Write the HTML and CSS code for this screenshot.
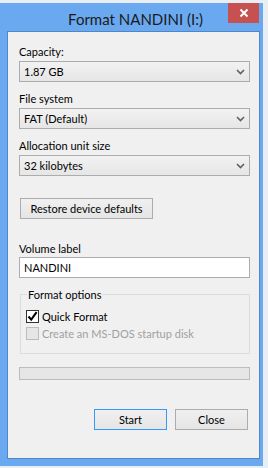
FILE: index.html
```html
<!DOCTYPE html>
<html lang="en">
<head>
    <meta charset="UTF-8">
    <title>Format NANDINI (I:)</title>
    <link rel="stylesheet" href="styles.css">
</head>
<body>
    <div class="window">
        <div class="titlebar">
            <span class="title">Format NANDINI (I:)</span>
            <button class="close-btn" title="Close">
                <svg width="10" height="10" viewBox="0 0 10 10">
                    <path d="M1.5 1.5 L8.5 8.5 M8.5 1.5 L1.5 8.5" stroke="#fff" stroke-width="2"/>
                </svg>
            </button>
        </div>

        <div class="client">
            <div class="field">
                <div class="label">Capacity:</div>
                <div class="combo">
                    <span>1.87 GB</span>
                    <svg class="chev" width="9" height="6" viewBox="0 0 9 6"><path d="M1 1 L4.5 4.5 L8 1" fill="none" stroke="#606060" stroke-width="1.6"/></svg>
                </div>
            </div>

            <div class="field">
                <div class="label">File system</div>
                <div class="combo">
                    <span>FAT (Default)</span>
                    <svg class="chev" width="9" height="6" viewBox="0 0 9 6"><path d="M1 1 L4.5 4.5 L8 1" fill="none" stroke="#606060" stroke-width="1.6"/></svg>
                </div>
            </div>

            <div class="field">
                <div class="label">Allocation unit size</div>
                <div class="combo">
                    <span>32 kilobytes</span>
                    <svg class="chev" width="9" height="6" viewBox="0 0 9 6"><path d="M1 1 L4.5 4.5 L8 1" fill="none" stroke="#606060" stroke-width="1.6"/></svg>
                </div>
            </div>

            <button class="btn restore-btn">Restore device defaults</button>

            <div class="field volume">
                <div class="label">Volume label</div>
                <div class="textbox">NANDINI</div>
            </div>

            <fieldset class="group">
                <legend>Format options</legend>
                <label class="check">
                    <span class="box">
                        <svg width="11" height="11" viewBox="0 0 11 11"><path d="M1.5 5.5 L4.2 8.6 L9.6 1.2" fill="none" stroke="#000" stroke-width="2"/></svg>
                    </span>
                    Quick Format
                </label>
                <label class="check disabled">
                    <span class="box"></span>
                    Create an MS-DOS startup disk
                </label>
            </fieldset>

            <div class="progress"></div>

            <div class="actions">
                <button class="btn default">Start</button>
                <button class="btn">Close</button>
            </div>
        </div>
    </div>
</body>
</html>
```

FILE: styles.css
```css
body {
    margin: 0;
    background: #e9eef4;
    font-family: Lato, "Liberation Sans", sans-serif;
    font-size: 11px;
    color: #000;
    overflow: hidden;
}

.window {
    box-sizing: border-box;
    width: 263px;
    height: 463px;
    margin-top: 3px;
    padding: 0 3px 7px 7px;
    background: #6aa9f0;
    display: flex;
    flex-direction: column;
}

.titlebar {
    position: relative;
    height: 28px;
    display: flex;
    align-items: center;
    justify-content: center;
    padding-left: 4px;
}

.title {
    font-size: 15px;
    color: #1b1b1b;
    margin-top: 3px;
}

.close-btn {
    position: absolute;
    top: 0;
    right: 1px;
    width: 31px;
    height: 20px;
    border: none;
    padding: 0;
    background: #c75050;
    display: flex;
    align-items: center;
    justify-content: center;
}

.client {
    flex: 1;
    background: #f0f0f0;
    border: 1px solid #4f86c6;
    padding: 12px 9px 0 11px;
}

.field {
    margin-bottom: 9px;
}

.label {
    line-height: 15px;
    margin-bottom: 2px;
}

.combo {
    box-sizing: border-box;
    height: 21px;
    border: 1px solid #acacac;
    background: linear-gradient(#f2f2f2, #e6e6e6);
    display: flex;
    align-items: center;
    justify-content: space-between;
    padding: 0 4px 0 4px;
}

.chev {
    margin-top: 1px;
}

.btn {
    box-sizing: border-box;
    height: 21px;
    border: 1px solid #acacac;
    background: linear-gradient(#f0f0f0, #e5e5e5);
    font-family: inherit;
    font-size: 11px;
    color: #000;
    padding: 0;
}

.restore-btn {
    display: block;
    width: 133px;
    margin: 22px 0 0 1px;
}

.volume {
    margin-top: 22px;
    margin-bottom: 0;
}

.volume .label {
    margin-bottom: 1px;
}

.textbox {
    box-sizing: border-box;
    height: 21px;
    border: 1px solid #abadb3;
    background: #fff;
    line-height: 19px;
    padding-left: 4px;
}

.group {
    margin: 9px 0 0 1px;
    border: 1px solid #dcdcdc;
    padding: 6px 5px 11px 5px;
    min-width: 0;
}

.group legend {
    padding: 0 1px;
    margin-left: 1px;
    line-height: 15px;
}

.check {
    display: flex;
    align-items: center;
    gap: 3px;
    height: 17px;
}

.box {
    box-sizing: border-box;
    width: 13px;
    height: 13px;
    border: 1px solid #333;
    background: #fff;
    display: flex;
    align-items: center;
    justify-content: center;
}

.check.disabled {
    color: #a0a0a0;
}

.check.disabled .box {
    border-color: #bcbcbc;
    background: #e6e6e6;
}

.progress {
    box-sizing: border-box;
    height: 13px;
    margin-top: 13px;
    border: 1px solid #bcbcbc;
    background: #e6e6e6;
}

.actions {
    display: flex;
    justify-content: flex-end;
    gap: 8px;
    margin-top: 29px;
    padding-right: 2px;
}

.actions .btn {
    width: 73px;
}

.btn.default {
    border-color: #3399ff;
}
```
